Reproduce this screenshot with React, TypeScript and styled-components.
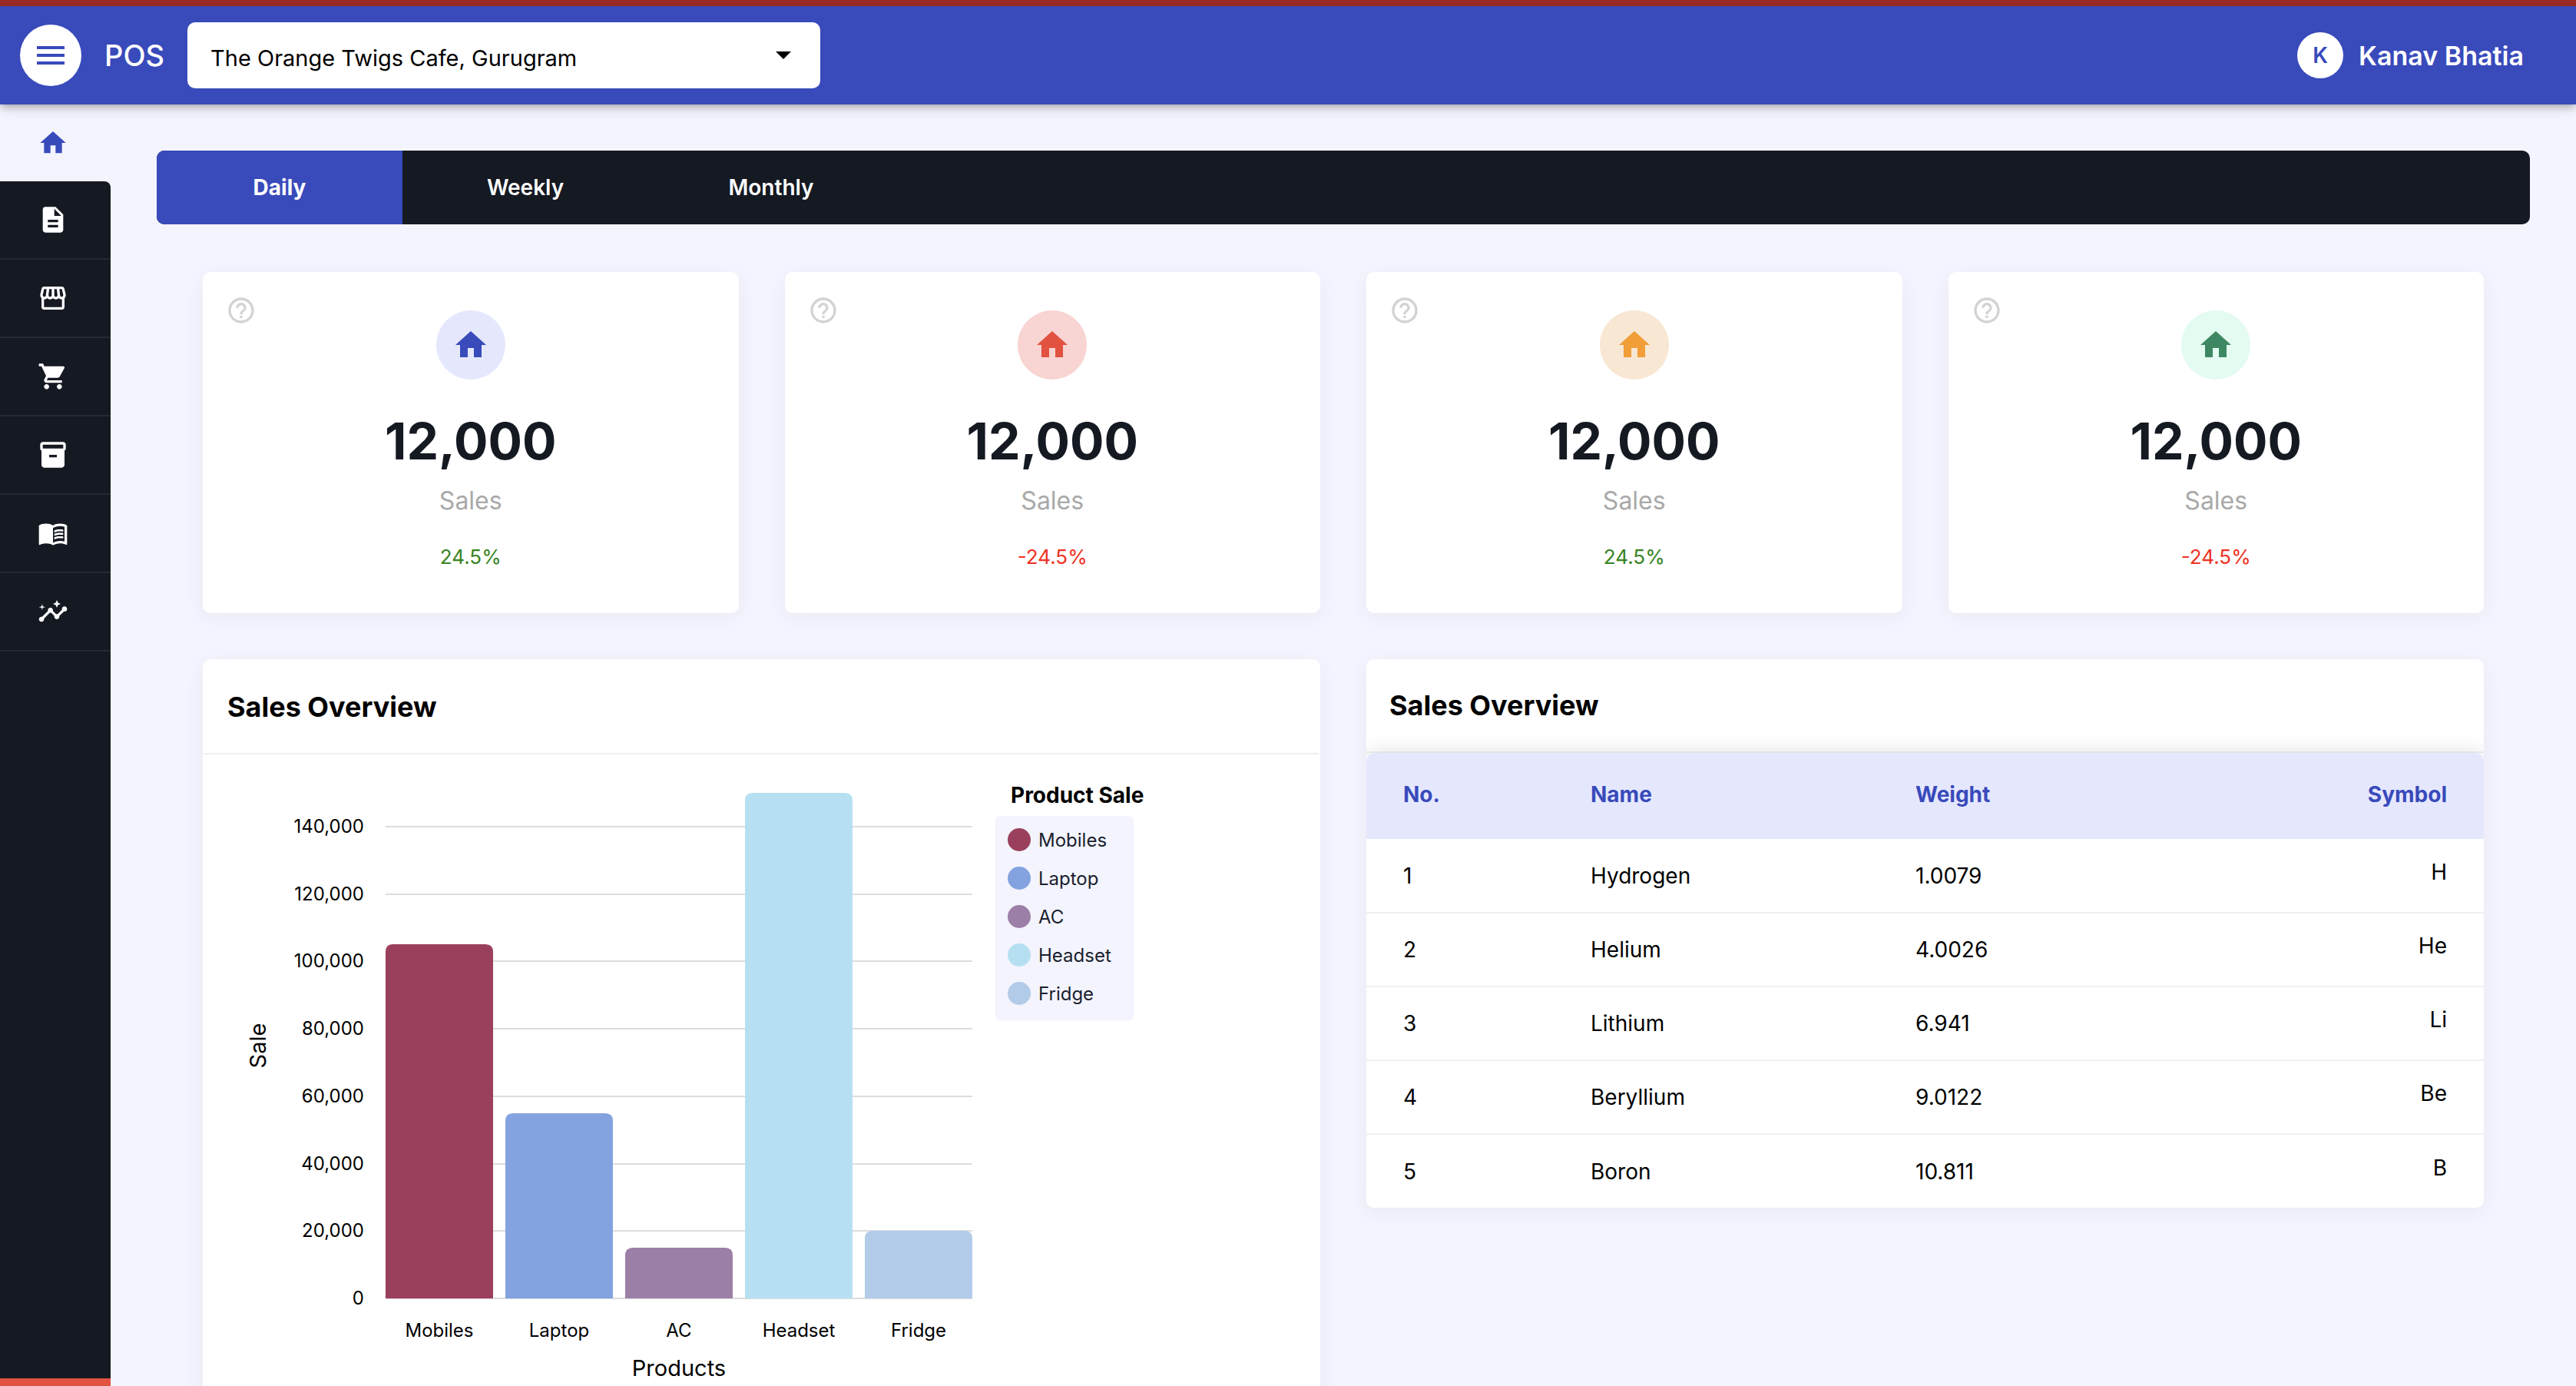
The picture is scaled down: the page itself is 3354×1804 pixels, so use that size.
import React from 'react';
import styled, { createGlobalStyle } from 'styled-components';
import {
  MdMenu,
  MdHome,
  MdDescription,
  MdOutlineStorefront,
  MdShoppingCart,
  MdInventory2,
  MdMenuBook,
  MdInsights,
  MdHelpOutline,
} from 'react-icons/md';

const color = {
  primary: '#394abb',
  primarySoft: '#e5e8fd',
  dark: '#151922',
  page: '#f3f4fd',
  line: '#f0f0f0',
  cardShadow: '0 6px 30px rgba(60, 40, 90, 0.05)',
};

const GlobalStyle = createGlobalStyle`
  *, *::before, *::after { box-sizing: border-box; }
  body {
    margin: 0;
    background: ${color.page};
    font-family: Inter, "Noto Sans", sans-serif;
    font-size: 28px;
    color: #000;
  }
  button, select { font: inherit; color: inherit; }
  h2, p { margin: 0; }
`;

const Shell = styled.div`
  display: flex;
  flex-direction: column;
  height: 100vh;
`;

const Header = styled.header`
  position: relative;
  z-index: 1;
  display: flex;
  align-items: center;
  flex: none;
  height: 136px;
  padding: 0 68px 0 26px;
  border-top: 8px solid #982a26;
  background: ${color.primary};
  color: #fff;
  box-shadow: 0 4px 8px -2px rgba(0, 0, 0, 0.2), 0 6px 14px rgba(0, 0, 0, 0.16);
`;

const MenuButton = styled.button`
  display: grid;
  place-items: center;
  width: 80px;
  height: 80px;
  padding: 0;
  border: 0;
  border-radius: 50%;
  background: #fff;
  color: ${color.primary};
  font-size: 48px;
  cursor: pointer;
`;

const Brand = styled.span`
  margin: 0 30px;
  font-size: 38px;
  font-weight: 500;
`;

const SelectBox = styled.label`
  position: relative;
  width: 824px;
`;

const OutletSelect = styled.select`
  display: block;
  width: 100%;
  height: 86px;
  padding: 6px 80px 0 30px;
  border: 0;
  border-radius: 10px;
  background: #fff;
  color: #000;
  font-size: 29px;
  appearance: none;
`;

const Caret = styled.span`
  position: absolute;
  top: 38px;
  right: 38px;
  border: 10px solid transparent;
  border-top-color: #000;
  border-bottom: 0;
  pointer-events: none;
`;

const Account = styled.div`
  display: flex;
  align-items: center;
  gap: 20px;
  margin-left: auto;
  font-size: 34px;
  font-weight: 600;
`;

const Avatar = styled.span`
  display: grid;
  place-items: center;
  width: 60px;
  height: 60px;
  border-radius: 50%;
  background: #fff;
  color: ${color.primary};
  font-size: 28px;
`;

const Body = styled.div`
  display: flex;
  flex: 1;
  min-height: 0;
`;

const Sidebar = styled.nav`
  display: flex;
  flex-direction: column;
  flex: none;
  width: 144px;
  border-bottom: 10px solid #e15241;

  &::after {
    content: '';
    flex: 1;
    background: ${color.dark};
  }
`;

const NavLink = styled.a<{ $active?: boolean }>`
  display: flex;
  align-items: center;
  flex: none;
  height: ${(p) => (p.$active ? 100 : 102)}px;
  padding-left: 49px;
  border-bottom: ${(p) => (p.$active ? '0' : '2px solid #252933')};
  background: ${(p) => (p.$active ? color.page : color.dark)};
  color: ${(p) => (p.$active ? color.primary : '#fff')};
  font-size: 40px;

  &:nth-child(2) { border-top-right-radius: 8px; }
`;

const Main = styled.main`
  flex: 1;
  min-width: 0;
  padding: 60px;
  overflow-y: auto;
  scrollbar-width: none;
`;

const Tabs = styled.div`
  display: flex;
  height: 96px;
  border-radius: 10px;
  background: ${color.dark};
  overflow: hidden;
`;

const Tab = styled.button<{ $active?: boolean }>`
  width: 320px;
  padding: 0;
  border: 0;
  background: ${(p) => (p.$active ? color.primary : 'transparent')};
  color: #fff;
  font-weight: ${(p) => (p.$active ? 700 : 600)};
  cursor: pointer;
`;

const Grid = styled.div`
  display: grid;
  grid-template-columns: repeat(4, 1fr);
  align-items: start;
  gap: 60px;
  padding: 62px 60px 0;
`;

const StatCard = styled.section`
  position: relative;
  display: flex;
  flex-direction: column;
  align-items: center;
  height: 444px;
  padding-top: 50px;
  border-radius: 10px;
  background: #fff;
  box-shadow: ${color.cardShadow};
`;

const HelpButton = styled.button`
  position: absolute;
  top: 30px;
  left: 30px;
  display: grid;
  padding: 0;
  border: 0;
  background: none;
  color: #d3d3d3;
  font-size: 40px;
  cursor: pointer;
`;

const StatIcon = styled.span<{ $bg: string; $fg: string }>`
  display: grid;
  place-items: center;
  width: 90px;
  height: 90px;
  border-radius: 50%;
  background: ${(p) => p.$bg};
  color: ${(p) => p.$fg};
  font-size: 48px;
`;

const StatValue = styled.p`
  margin-top: 32px;
  color: ${color.dark};
  font-size: 66px;
  font-weight: 700;
  line-height: 96px;
`;

const StatLabel = styled.p`
  margin-top: 6px;
  color: #a9a9a9;
  font-size: 32px;
  line-height: 48px;
`;

const StatChange = styled.p<{ $down?: boolean }>`
  margin-top: 28px;
  color: ${(p) => (p.$down ? '#ef3124' : '#37831f')};
  font-size: 26px;
  line-height: 42px;
`;

const Panel = styled.section<{ $framed?: boolean }>`
  grid-column: span 2;
  border: ${(p) => (p.$framed ? '2px solid #fff' : '0')};
  border-radius: 10px;
  background: #fff;
  box-shadow: ${color.cardShadow};
  overflow: hidden;
`;

const PanelTitle = styled.h2`
  height: 122px;
  padding-left: 30px;
  border-bottom: 2px solid ${color.line};
  font-size: 36px;
  font-weight: 700;
  line-height: 120px;
`;

const ChartArea = styled.div`
  display: flex;
  gap: 30px;
  padding: 30px 30px 60px;
`;

const ChartSvg = styled.svg`
  display: block;
  flex: none;
`;

const Legend = styled.div`
  display: flex;
  flex-direction: column;
  align-items: flex-start;
`;

const LegendTitle = styled.h2`
  height: 50px;
  padding-left: 20px;
  font-size: 28px;
  font-weight: 700;
  line-height: 46px;
`;

const LegendList = styled.ul`
  width: 180px;
  margin: 0;
  padding: 6px 16px 10px;
  border-radius: 6px;
  background: ${color.page};
  list-style: none;
`;

const LegendItem = styled.li<{ $fill: string }>`
  display: flex;
  align-items: center;
  gap: 10px;
  height: 50px;
  color: #1a202f;
  font-size: 24px;

  &::before {
    content: '';
    flex: none;
    width: 30px;
    height: 30px;
    border-radius: 50%;
    background: ${(p) => p.$fill};
  }
`;

const TableWrap = styled.div`
  border-radius: 10px;
  box-shadow: 0 0 30px rgba(0, 0, 0, 0.12);
  overflow: hidden;
`;

const Table = styled.table`
  width: 100%;
  border-collapse: collapse;
  table-layout: fixed;
  background: #fff;

  th, td {
    padding: 0 48px;
    text-align: left;
    line-height: 42px;
  }
  th {
    height: 112px;
    padding-bottom: 4px;
    background: ${color.primarySoft};
    color: ${color.primary};
    font-weight: 700;
  }
  th:first-child { width: 244px; }
  th:nth-child(2) { width: 423px; }
  th:last-child, td:last-child { text-align: right; }
  td { height: 96px; }
  td:last-child { padding-bottom: 10px; }
  tbody tr + tr td { border-top: 2px solid ${color.line}; }
`;

const navItems = [
  { label: 'Home', Icon: MdHome },
  { label: 'Reports', Icon: MdDescription },
  { label: 'Store', Icon: MdOutlineStorefront },
  { label: 'Orders', Icon: MdShoppingCart },
  { label: 'Inventory', Icon: MdInventory2 },
  { label: 'Menu', Icon: MdMenuBook },
  { label: 'Insights', Icon: MdInsights },
];

const stats = [
  { bg: '#e5e8fd', fg: '#394abb', change: '24.5%' },
  { bg: '#f8d4d2', fg: '#e15241', change: '-24.5%' },
  { bg: '#f8e7d3', fg: '#f19d38', change: '24.5%' },
  { bg: '#e3fbf1', fg: '#3d8862', change: '-24.5%' },
];

const products = [
  { name: 'Mobiles', sale: 105000, fill: '#9b405c' },
  { name: 'Laptop', sale: 55000, fill: '#83a2df' },
  { name: 'AC', sale: 15000, fill: '#9c7fa6' },
  { name: 'Headset', sale: 150000, fill: '#b6e0f2' },
  { name: 'Fridge', sale: 20000, fill: '#b2cbe9' },
];

const elements = [
  ['1', 'Hydrogen', '1.0079', 'H'],
  ['2', 'Helium', '4.0026', 'He'],
  ['3', 'Lithium', '6.941', 'Li'],
  ['4', 'Beryllium', '9.0122', 'Be'],
  ['5', 'Boron', '10.811', 'B'],
];

const plot = { left: 206, top: 20, width: 764, height: 658, bar: 140, step: 156, max: 150000 };
const ticks = [0, 20000, 40000, 60000, 80000, 100000, 120000, 140000];

function SalesChart() {
  const bottom = plot.top + plot.height;
  const yOf = (v: number) => Math.round(bottom - (v / plot.max) * plot.height);
  return (
    <ChartSvg width={970} height={810} role="img" aria-label="Sale by product">
      {ticks.map((t) => (
        <g key={t}>
          <line x1={plot.left} x2={plot.left + plot.width} y1={yOf(t)} y2={yOf(t)} stroke="#ddd" strokeWidth={2} />
          <text x={plot.left - 28} y={yOf(t) + 8} fontSize={24} textAnchor="end">
            {t.toLocaleString('en-US')}
          </text>
        </g>
      ))}
      {products.map((p, i) => {
        const x = plot.left + i * plot.step;
        const y = yOf(p.sale);
        const r = 10;
        return (
          <g key={p.name}>
            <path
              d={`M${x} ${bottom}V${y + r}q0 ${-r} ${r} ${-r}h${plot.bar - 2 * r}q${r} 0 ${r} ${r}V${bottom}z`}
              fill={p.fill}
            />
            <text x={x + plot.bar / 2} y={bottom + 50} fontSize={24} textAnchor="middle">
              {p.name}
            </text>
          </g>
        );
      })}
      <text x={plot.left + plot.width / 2} y={bottom + 101} fontSize={29} textAnchor="middle">
        Products
      </text>
      <text transform={`translate(50 ${plot.top + plot.height / 2}) rotate(-90)`} fontSize={29} textAnchor="middle">
        Sale
      </text>
    </ChartSvg>
  );
}

export default function App() {
  return (
    <Shell>
      <GlobalStyle />
      <Header>
        <MenuButton type="button" aria-label="Open menu">
          <MdMenu />
        </MenuButton>
        <Brand>POS</Brand>
        <SelectBox>
          <OutletSelect aria-label="Outlet">
            <option>The Orange Twigs Cafe, Gurugram</option>
          </OutletSelect>
          <Caret />
        </SelectBox>
        <Account>
          <Avatar>K</Avatar>
          Kanav Bhatia
        </Account>
      </Header>
      <Body>
        <Sidebar aria-label="Main">
          {navItems.map(({ label, Icon }, i) => (
            <NavLink key={label} href="#" aria-label={label} $active={i === 0}>
              <Icon />
            </NavLink>
          ))}
        </Sidebar>
        <Main>
          <Tabs>
            <Tab type="button" $active>Daily</Tab>
            <Tab type="button">Weekly</Tab>
            <Tab type="button">Monthly</Tab>
          </Tabs>
          <Grid>
            {stats.map((s) => (
              <StatCard key={s.bg}>
                <HelpButton type="button" aria-label="Help">
                  <MdHelpOutline />
                </HelpButton>
                <StatIcon $bg={s.bg} $fg={s.fg}>
                  <MdHome />
                </StatIcon>
                <StatValue>12,000</StatValue>
                <StatLabel>Sales</StatLabel>
                <StatChange $down={s.change.startsWith('-')}>{s.change}</StatChange>
              </StatCard>
            ))}
            <Panel $framed>
              <PanelTitle>Sales Overview</PanelTitle>
              <ChartArea>
                <SalesChart />
                <Legend>
                  <LegendTitle>Product Sale</LegendTitle>
                  <LegendList>
                    {products.map((p) => (
                      <LegendItem key={p.name} $fill={p.fill}>{p.name}</LegendItem>
                    ))}
                  </LegendList>
                </Legend>
              </ChartArea>
            </Panel>
            <Panel>
              <PanelTitle>Sales Overview</PanelTitle>
              <TableWrap>
                <Table>
                  <thead>
                    <tr>
                      <th>No.</th>
                      <th>Name</th>
                      <th>Weight</th>
                      <th>Symbol</th>
                    </tr>
                  </thead>
                  <tbody>
                    {elements.map((row) => (
                      <tr key={row[0]}>
                        {row.map((cell, i) => (
                          <td key={i}>{cell}</td>
                        ))}
                      </tr>
                    ))}
                  </tbody>
                </Table>
              </TableWrap>
            </Panel>
          </Grid>
        </Main>
      </Body>
    </Shell>
  );
}
